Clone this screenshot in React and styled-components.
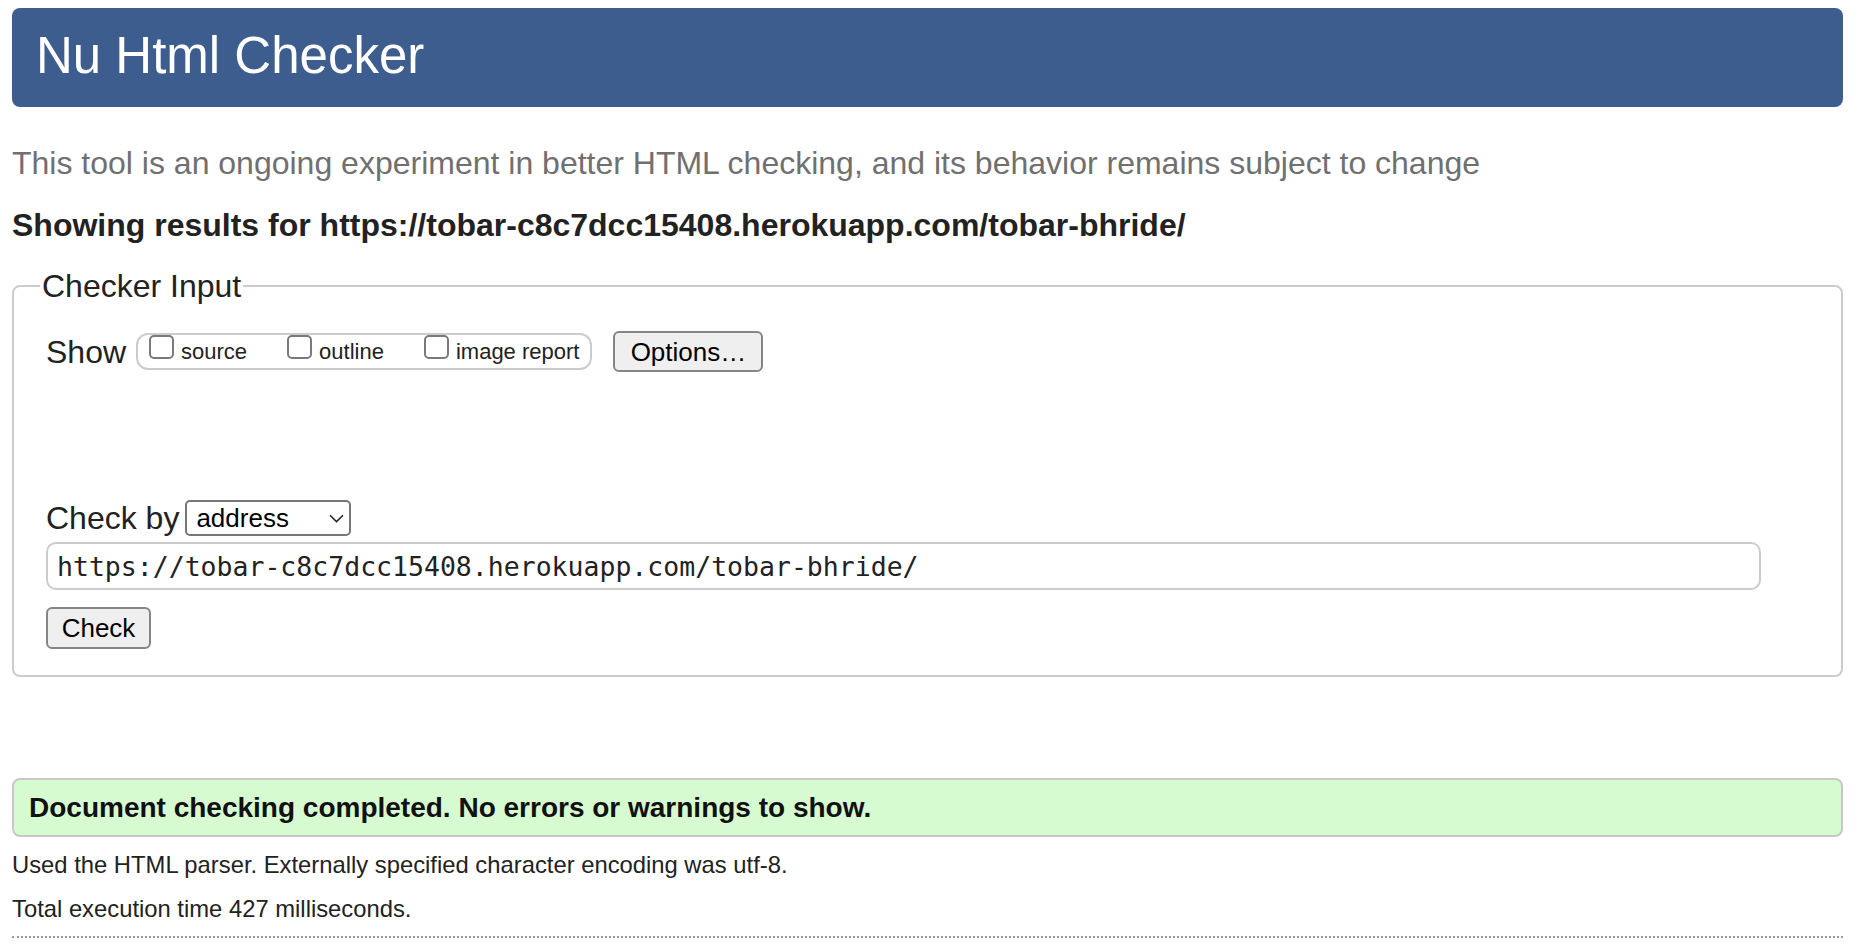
import React from "react";
import styled, { createGlobalStyle } from "styled-components";

const GlobalStyle = createGlobalStyle`
  html, body {
    margin: 0;
    padding: 0;
    background: #ffffff;
  }
  body {
    font-family: "Liberation Sans", Arial, sans-serif;
    color: #222222;
  }
`;

const Page = styled.div`
  box-sizing: border-box;
  min-height: 952px;
  padding: 8px 19px 0 12px;
`;

const Banner = styled.h1`
  box-sizing: border-box;
  height: 99px;
  margin: 0;
  padding: 0 0 4px 24px;
  border-radius: 8px;
  background: #3d5d8f;
  color: #ffffff;
  font-size: 51px;
  font-weight: normal;
  line-height: 95px;
`;

const Intro = styled.p`
  margin: 36px 0 0;
  font-size: 32px;
  line-height: 40px;
  color: #707070;
`;

const ResultsFor = styled.h2`
  margin: 22px 0 0;
  font-size: 32px;
  line-height: 40px;
  font-weight: bold;
  color: #222222;
`;

const InputSet = styled.fieldset`
  min-width: 0;
  margin: 23px 0 0;
  padding: 27px 32px 26px 32px;
  border: 2px solid #cccccc;
  border-radius: 8px;
`;

const Legend = styled.legend`
  margin-left: -6px;
  padding: 0 2px;
  font-size: 32px;
  line-height: 36px;
  color: #222222;
`;

const Row = styled.div`
  display: flex;
  align-items: center;
  height: ${(props) => props.h}px;
  margin-top: ${(props) => props.mt || 0}px;
`;

const FieldLabel = styled.span`
  margin-right: ${(props) => props.gap}px;
  font-size: 32px;
  line-height: 36px;
  color: #222222;
`;

const CheckGroup = styled.div`
  box-sizing: border-box;
  display: flex;
  align-items: flex-start;
  height: 37px;
  padding: 0 11px 0 11px;
  border: 2px solid #cccccc;
  border-radius: 12px;
`;

const CheckItem = styled.label`
  display: flex;
  align-items: flex-start;
  margin-left: ${(props) => (props.first ? 0 : 40)}px;
`;

const Box = styled.input`
  appearance: none;
  box-sizing: border-box;
  flex: none;
  width: 25px;
  height: 24px;
  margin: 0;
  border: 2px solid #7a7a7a;
  border-radius: 5px;
  background: #ffffff;
`;

const CheckText = styled.span`
  margin: 2px 0 0 7px;
  font-size: 22px;
  line-height: 30px;
  color: #222222;
`;

const Button = styled.button`
  box-sizing: border-box;
  width: ${(props) => props.w}px;
  height: ${(props) => props.h}px;
  margin-left: ${(props) => props.ml || 0}px;
  margin-top: ${(props) => props.mt || 0}px;
  padding: 0;
  border: 2px solid #858585;
  border-radius: 6px;
  background: #efefef;
  color: #000000;
  font-family: "Liberation Sans", Arial, sans-serif;
  font-size: 26px;
  line-height: 30px;
`;

const SelectBox = styled.div`
  box-sizing: border-box;
  display: flex;
  align-items: center;
  width: 166px;
  height: 36px;
  padding: 0 5px 0 9px;
  border: 2px solid #767676;
  border-radius: 5px;
  font-size: 26px;
  color: #000000;

  svg {
    margin-left: auto;
  }
`;

const UrlField = styled.div`
  box-sizing: border-box;
  display: flex;
  align-items: center;
  width: 1715px;
  height: 48px;
  margin-top: 6px;
  padding-left: 9px;
  border: 2px solid #cccccc;
  border-radius: 10px;
  font-family: "DejaVu Sans Mono", "Liberation Mono", monospace;
  font-size: 26.5px;
  color: #222222;
`;

const Success = styled.div`
  box-sizing: border-box;
  height: 59px;
  margin-top: 101px;
  padding-left: 15px;
  border: 2px solid #c8c8c8;
  border-radius: 8px;
  background: #d7fbd1;
  font-size: 28px;
  font-weight: bold;
  line-height: 55px;
  color: #111111;
`;

const Details = styled.div`
  margin-top: 6px;
`;

const Line = styled.p`
  margin: 0;
  font-size: 23.8px;
  line-height: 44px;
  color: #222222;
`;

const Rule = styled.hr`
  margin: 5px 0 0;
  border: 0;
  border-top: 2px dotted #999999;
`;

function Chevron() {
  return (
    <svg width="15" height="9" viewBox="0 0 15 9">
      <path d="M1 1.2 L7.5 7.6 L14 1.2" fill="none" stroke="#222" strokeWidth="1.5" />
    </svg>
  );
}

const choices = [
  { id: "source", label: "source" },
  { id: "outline", label: "outline" },
  { id: "imagereport", label: "image report" },
];

const url = "https://tobar-c8c7dcc15408.herokuapp.com/tobar-bhride/";

export default function App() {
  return (
    <Page>
      <GlobalStyle />
      <Banner>Nu Html Checker</Banner>
      <Intro>
        This tool is an ongoing experiment in better HTML checking, and its
        behavior remains subject to change
      </Intro>
      <ResultsFor>Showing results for {url}</ResultsFor>
      <InputSet>
        <Legend>Checker Input</Legend>
        <Row h={41}>
          <FieldLabel gap={10}>Show</FieldLabel>
          <CheckGroup>
            {choices.map((c, i) => (
              <CheckItem key={c.id} first={i === 0}>
                <Box type="checkbox" />
                <CheckText>{c.label}</CheckText>
              </CheckItem>
            ))}
          </CheckGroup>
          <Button w={150} h={41} ml={21}>
            Options…
          </Button>
        </Row>
        <Row h={36} mt={128}>
          <FieldLabel gap={6}>Check by</FieldLabel>
          <SelectBox>
            address
            <Chevron />
          </SelectBox>
        </Row>
        <UrlField>{url}</UrlField>
        <Button w={105} h={42} mt={17}>
          Check
        </Button>
      </InputSet>
      <Success>Document checking completed. No errors or warnings to show.</Success>
      <Details>
        <Line>Used the HTML parser. Externally specified character encoding was utf-8.</Line>
        <Line>Total execution time 427 milliseconds.</Line>
      </Details>
      <Rule />
    </Page>
  );
}
